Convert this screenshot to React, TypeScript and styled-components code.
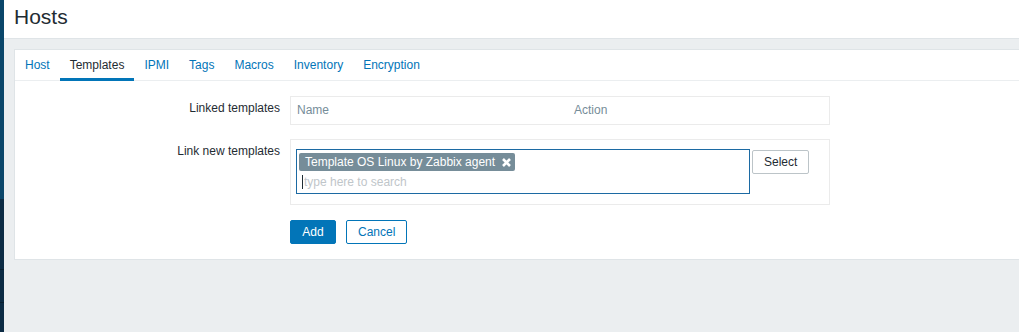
import styled, { createGlobalStyle } from "styled-components";

const GlobalStyle = createGlobalStyle`
  html, body {
    margin: 0;
    padding: 0;
    overflow: hidden;
    background: #ebeef0;
  }
  body {
    font-family: "Liberation Sans", Arial, sans-serif;
    font-size: 12px;
    color: #1f2c33;
  }
`;

const Page = styled.div`
  display: flex;
  height: 332px;
  width: 1019px;
  overflow: hidden;
`;

const Sidebar = styled.div`
  width: 4px;
  flex-shrink: 0;
  display: flex;
  flex-direction: column;
`;

const SideBlock = styled.div<{ $h: number; $dark?: boolean }>`
  height: ${(p) => p.$h}px;
  background: ${(p) => (p.$dark ? "#0c2b44" : "#0a466a")};
  border-bottom: ${(p) => (p.$dark ? "1px solid #081e2f" : "none")};
`;

const SideRest = styled.div`
  flex: 1;
  background: #0c2b44;
`;

const Main = styled.div`
  flex: 1;
  display: flex;
  flex-direction: column;
  min-width: 0;
`;

const Header = styled.header`
  background: #fff;
  border-bottom: 1px solid #dfe4e7;
  padding: 6px 10px 11px;
`;

const Title = styled.h1`
  margin: 0;
  font-size: 21px;
  line-height: 21px;
  font-weight: normal;
  color: #1f2c33;
`;

const Content = styled.div`
  flex: 1;
  background: #ebeef0;
  padding: 10px 0 0 10px;
`;

const Panel = styled.div`
  background: #fff;
  border: 1px solid #dfe4e7;
  margin-right: -20px;
`;

const TabList = styled.ul`
  list-style: none;
  margin: 0;
  padding: 0;
  display: flex;
  border-bottom: 1px solid #ebeef0;
`;

const Tab = styled.li<{ $active?: boolean }>`
  padding: 8px 10px 6px;
  line-height: 14px;
  margin-bottom: -1px;
  border-bottom: 3px solid ${(p) => (p.$active ? "#0275b8" : "transparent")};
  color: ${(p) => (p.$active ? "#1f2c33" : "#0275b8")};
  cursor: pointer;
`;

const Form = styled.div`
  display: grid;
  grid-template-columns: 265px 540px;
  column-gap: 10px;
  row-gap: 14px;
  padding: 15px 0;
  align-items: start;
`;

const Label = styled.label`
  text-align: right;
  padding-top: 5px;
  line-height: 14px;
`;

const Box = styled.div`
  border: 1px solid #ebebeb;
`;

const TableHead = styled.div`
  display: grid;
  grid-template-columns: 277px 1fr;
  padding: 6px 6px 7px;
  line-height: 14px;
  color: #768d99;
`;

const SelectRow = styled.div`
  display: flex;
  align-items: flex-start;
  gap: 2px;
  padding: 9px 5px 10px;
`;

const MultiSelect = styled.div`
  box-sizing: border-box;
  width: 454px;
  height: 45px;
  border: 1px solid #1c6aa3;
  padding: 3px 0 0 2px;
  display: flex;
  flex-direction: column;
  align-items: flex-start;
`;

const Chip = styled.span`
  display: inline-flex;
  align-items: center;
  height: 18px;
  line-height: 18px;
  padding: 0 4px 0 6px;
  gap: 7px;
  background: #768d99;
  color: #fff;
  border-radius: 2px;
  white-space: nowrap;
`;

const RemoveIcon = styled.svg`
  width: 9px;
  height: 9px;
  display: block;
`;

const SearchInput = styled.input`
  margin: 4px 0 0 3px;
  height: 14px;
  padding: 0 0 0 1px;
  border: 0;
  border-left: 1px solid #1f2c33;
  outline: none;
  font-family: inherit;
  font-size: 12px;
  line-height: 14px;
  width: 420px;
  color: #1f2c33;
  background: transparent;

  &::placeholder {
    color: #bfc6ca;
  }
`;

const Button = styled.button<{ $variant: "primary" | "outline" | "alt" }>`
  height: 24px;
  min-width: 46px;
  padding: 0 11px;
  border-radius: 2px;
  font-family: inherit;
  font-size: 12px;
  line-height: 22px;
  cursor: pointer;
  border: 1px solid
    ${(p) => (p.$variant === "alt" ? "#bcc4c8" : "#0275b8")};
  background: ${(p) => (p.$variant === "primary" ? "#0275b8" : "#fff")};
  color: ${(p) =>
    p.$variant === "primary"
      ? "#fff"
      : p.$variant === "outline"
      ? "#0275b8"
      : "#1f2c33"};
`;

const SelectButton = styled(Button)`
  margin-top: 1px;
`;

const Actions = styled.div`
  display: flex;
  gap: 10px;
  padding-top: 1px;
`;

const tabs = ["Host", "Templates", "IPMI", "Tags", "Macros", "Inventory", "Encryption"];

export default function App() {
  return (
    <>
      <GlobalStyle />
      <Page>
        <Sidebar>
          <SideBlock $h={199} />
          <SideBlock $h={70} $dark />
          <SideBlock $h={32} $dark />
          <SideRest />
        </Sidebar>
        <Main>
          <Header>
            <Title>Hosts</Title>
          </Header>
          <Content>
            <Panel>
              <TabList>
                {tabs.map((t) => (
                  <Tab key={t} $active={t === "Templates"}>
                    {t}
                  </Tab>
                ))}
              </TabList>
              <Form>
                <Label>Linked templates</Label>
                <Box>
                  <TableHead>
                    <span>Name</span>
                    <span>Action</span>
                  </TableHead>
                </Box>

                <Label>Link new templates</Label>
                <Box>
                  <SelectRow>
                    <MultiSelect>
                      <Chip>
                        Template OS Linux by Zabbix agent
                        <RemoveIcon viewBox="0 0 9 9">
                          <path
                            d="M1 1 L8 8 M8 1 L1 8"
                            stroke="#fff"
                            strokeWidth="2.6"
                          />
                        </RemoveIcon>
                      </Chip>
                      <SearchInput placeholder="type here to search" readOnly />
                    </MultiSelect>
                    <SelectButton $variant="alt">Select</SelectButton>
                  </SelectRow>
                </Box>

                <span />
                <Actions>
                  <Button $variant="primary">Add</Button>
                  <Button $variant="outline">Cancel</Button>
                </Actions>
              </Form>
            </Panel>
          </Content>
        </Main>
      </Page>
    </>
  );
}
